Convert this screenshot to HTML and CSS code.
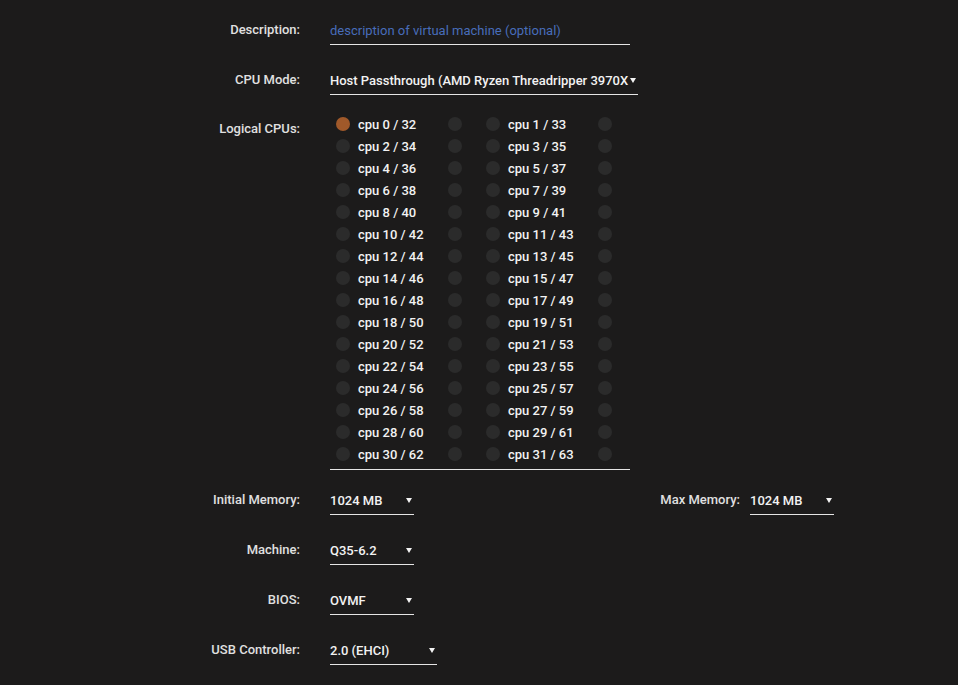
FILE: index.html
```html
<!DOCTYPE html>
<html lang="en">
<head>
  <meta charset="UTF-8">
  <title>Edit VM</title>
  <link rel="stylesheet" href="styles.css">
</head>
<body>
  <form class="vm-form">
    <div class="row">
      <label class="label">Description:</label>
      <div class="field text-field wide">
        <span class="placeholder">description of virtual machine (optional)</span>
      </div>
    </div>

    <div class="row">
      <label class="label">CPU Mode:</label>
      <div class="field select cpu-mode">
        <span class="value">Host Passthrough (AMD Ryzen Threadripper 3970X</span>
        <span class="arrow"></span>
      </div>
    </div>

    <div class="row cpu-row">
      <label class="label cpu-label">Logical CPUs:</label>
      <div class="cpu-grid" id="cpu-grid"></div>
    </div>

    <div class="row">
      <label class="label">Initial Memory:</label>
      <div class="field select small">
        <span class="value">1024 MB</span>
        <span class="arrow"></span>
      </div>
      <label class="label inline-label">Max Memory:</label>
      <div class="field select small">
        <span class="value">1024 MB</span>
        <span class="arrow"></span>
      </div>
    </div>

    <div class="row">
      <label class="label">Machine:</label>
      <div class="field select small">
        <span class="value">Q35-6.2</span>
        <span class="arrow"></span>
      </div>
    </div>

    <div class="row">
      <label class="label">BIOS:</label>
      <div class="field select small">
        <span class="value">OVMF</span>
        <span class="arrow"></span>
      </div>
    </div>

    <div class="row">
      <label class="label">USB Controller:</label>
      <div class="field select medium">
        <span class="value">2.0 (EHCI)</span>
        <span class="arrow"></span>
      </div>
    </div>
  </form>

  <script>
    // Build cpu pinning checkboxes: 32 cores, each with its hyperthread sibling
    const grid = document.getElementById('cpu-grid');
    for (let i = 0; i < 32; i++) {
      const cell = document.createElement('div');
      cell.className = 'cpu-cell';
      const checked = i === 0 ? ' checked' : '';
      cell.innerHTML =
        `<span class="check${checked}"></span>` +
        `<span class="cpu-name">cpu ${i} / ${i + 32}</span>` +
        `<span class="check"></span>`;
      grid.appendChild(cell);
    }
  </script>
</body>
</html>
```

FILE: styles.css
```css
body {
  margin: 0;
  background-color: #1c1b1b;
  color: #f2f2f2;
  font-family: Roboto, 'Liberation Sans', sans-serif;
  font-weight: 500;
  font-size: 13px;
}
.vm-form {
  padding-top: 16px;
  display: flex;
  flex-direction: column;
  gap: 21px;
}
.row {
  display: flex;
  align-items: flex-start;
}
.label {
  width: 330px;
  flex-shrink: 0;
  padding-right: 30px;
  box-sizing: border-box;
  text-align: right;
  line-height: 28px;
  color: #e0e0e0;
}
.inline-label {
  width: 336px;
  padding-right: 10px;
}
.field {
  height: 28px;
  line-height: 29px;
  border-bottom: 1px solid #e5e5e5;
  display: flex;
  align-items: center;
  white-space: nowrap;
}
.wide {
  width: 300px;
}
.placeholder {
  color: #486dba;
  font-weight: 400;
}
.select {
  position: relative;
  padding-right: 14px;
}
.select .value {
  flex: 1;
}
.select .arrow {
  position: absolute;
  right: 2px;
  top: 12px;
  width: 0;
  height: 0;
  border-left: 3px solid transparent;
  border-right: 3px solid transparent;
  border-top: 5px solid #f2f2f2;
}
.cpu-mode {
  width: 294px;
}
.small {
  width: 70px;
}
.medium {
  width: 93px;
}
.cpu-row {
  margin-top: -3px;
  margin-bottom: -5px;
}
.cpu-label {
  padding-top: 2px;
}
.cpu-grid {
  width: 300px;
  display: grid;
  grid-template-columns: 150px 150px;
  padding-bottom: 4px;
  border-bottom: 1px solid #e5e5e5;
}
.cpu-cell {
  height: 22px;
  display: flex;
  align-items: center;
  padding-left: 6px;
}
.check {
  width: 14px;
  height: 14px;
  border-radius: 50%;
  background-color: #2b2b2b;
  flex-shrink: 0;
}
.check.checked {
  background-color: #a0592a;
}
.cpu-name {
  width: 98px;
  padding-left: 8px;
  box-sizing: border-box;
}
```
